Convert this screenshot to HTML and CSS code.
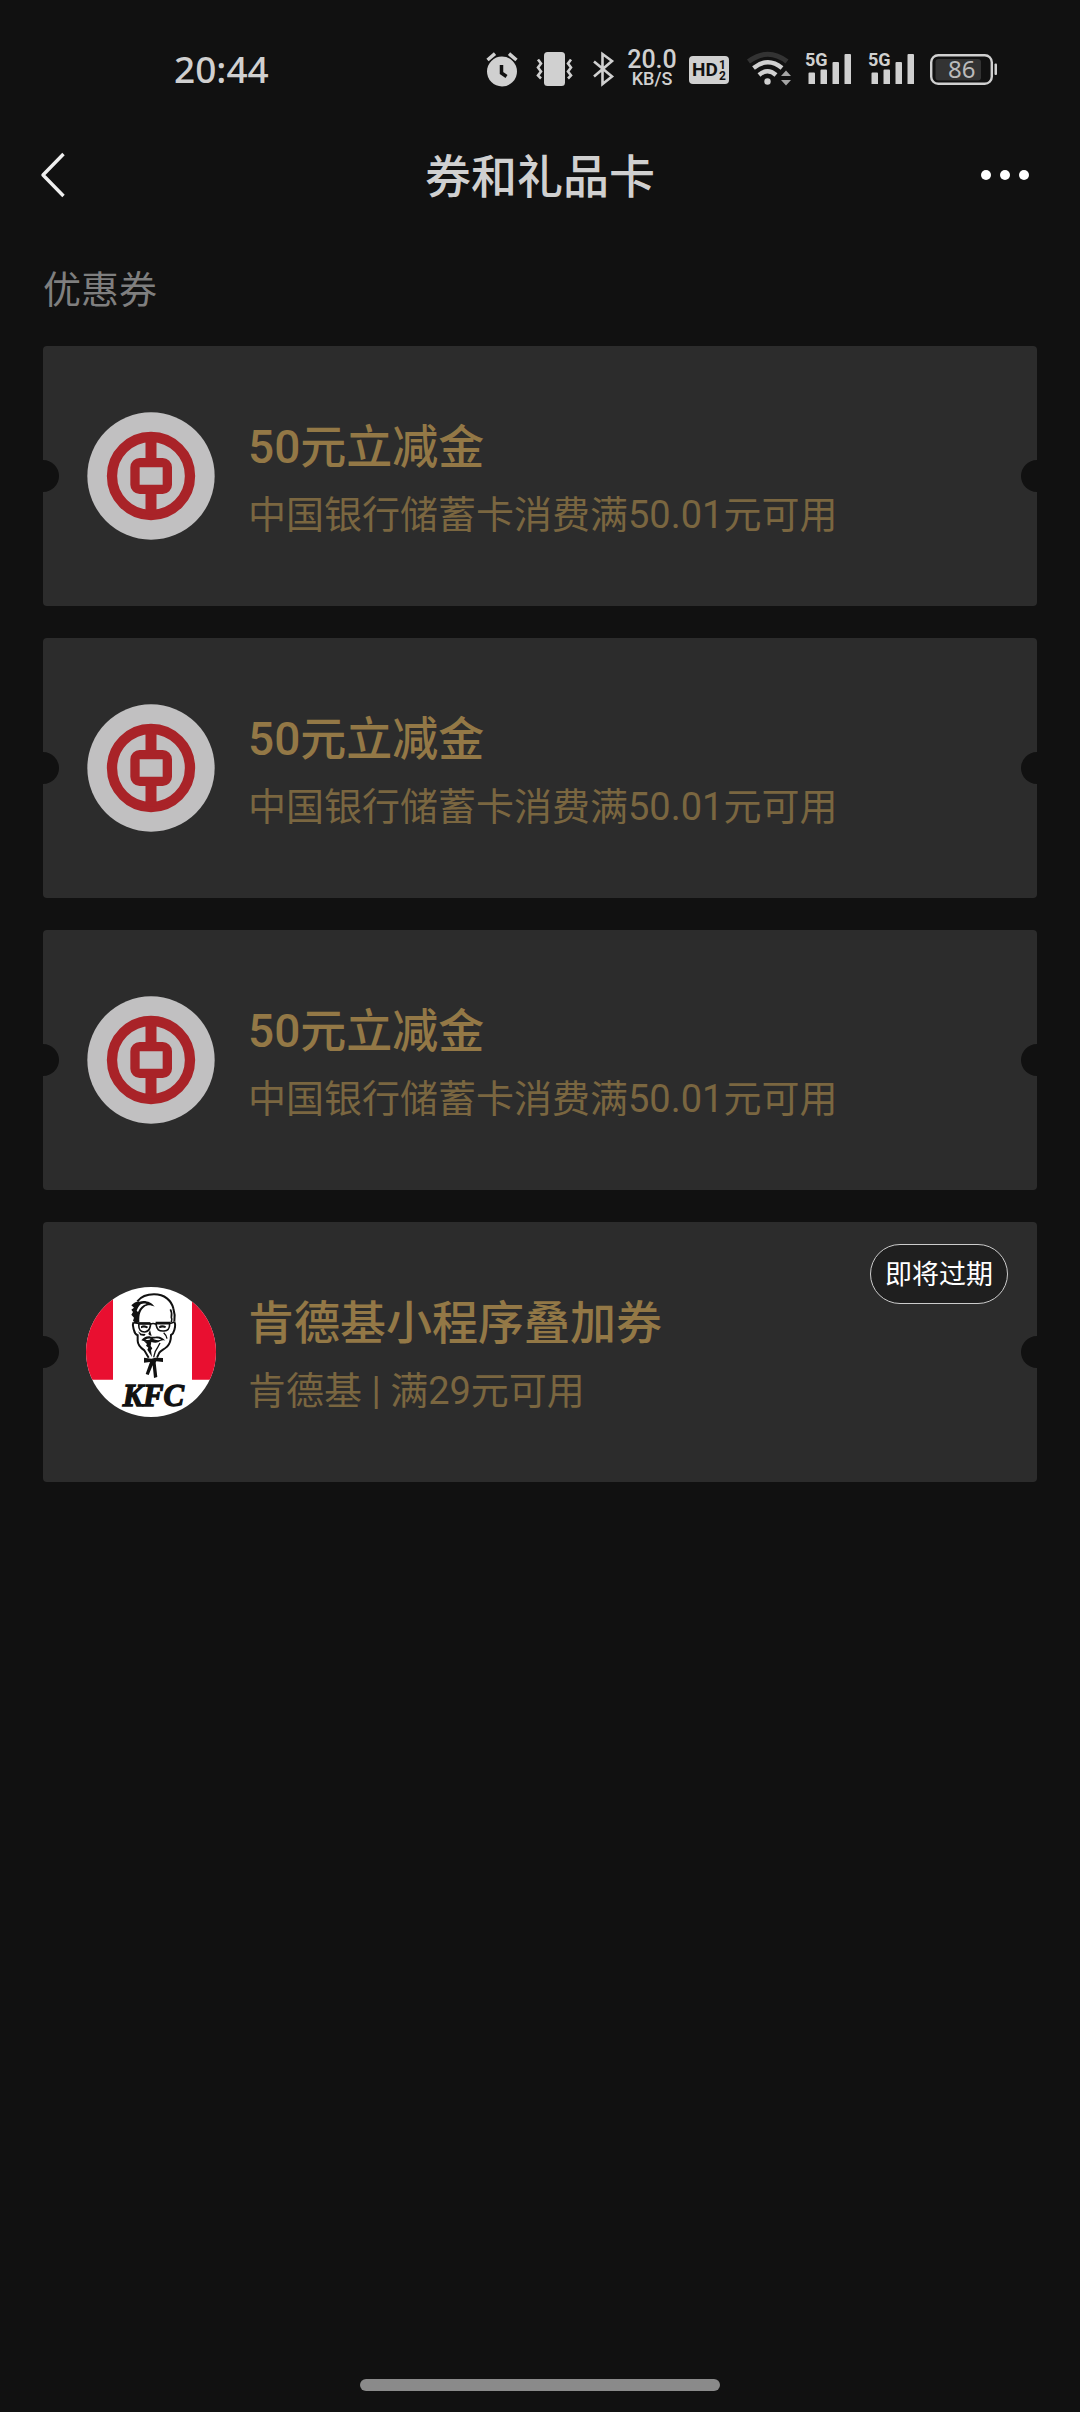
FILE: index.html
```html
<!DOCTYPE html>
<html lang="zh-CN">
<head>
  <meta charset="UTF-8" />
  <meta name="viewport" content="width=device-width, initial-scale=1.0" />
  <title>券和礼品卡</title>
  <link rel="stylesheet" href="styles.css">
</head>
<body>
  <!-- shared artwork -->
  <svg class="sprite" aria-hidden="true">
    <symbol id="boc" viewBox="0 0 390 390">
      <circle cx="195" cy="195" r="191" fill="#c1c0c1" />
      <g fill="none" stroke="#a92328">
        <circle cx="195" cy="195" r="117" stroke-width="31" />
        <path d="M195 85v70M195 240v70" stroke-width="33" />
        <rect x="147" y="155" width="97" height="80" rx="14" stroke-width="28" />
      </g>
    </symbol>
    <symbol id="bars" viewBox="0 0 55 36">
      <path d="M6.500 22.500q0-1 1-1h4.500q1 0 1 1V33h-6.500zM18.500 19.500q0-1 1-1h4.500q1 0 1 1V33h-6.500zM30.500 12q0-1 1-1h4.500q1 0 1 1V33h-6.500zM42.500 4q0-1 1-1h4.500q1 0 1 1V33h-6.500z" fill="#d0d0d0" />
    </symbol>
  </svg>

  <div class="status">
    <time>20:44</time>
    <div class="status-icons">
      <svg width="38" height="36" viewBox="0 0 38 36">
        <circle cx="18" cy="20.500" r="15" fill="#d0d0d0" />
        <path d="M3.500 9 11 2.700M25 2.700 32.500 9" stroke="#d0d0d0" stroke-width="3.500" />
        <path d="M17.500 14v8l5 3.500" fill="none" stroke="#111" stroke-width="3.500" />
      </svg>
      <svg width="49" height="36" viewBox="0 0 49 36">
        <rect x="14" y="1" width="21" height="34" rx="3.500" fill="#d0d0d0" />
        <path d="M8 8.500l3 4-3 4 3 4-3 4 3 3M41 8.500l-3 4 3 4-3 4 3 4-3 3" fill="none" stroke="#d0d0d0" stroke-width="2.600" />
      </svg>
      <svg width="31" height="36" viewBox="0 0 31 36">
        <path d="M7 10.500 25 25.500 15.500 33V3L25 10 7 25.500" fill="none" stroke="#d0d0d0" stroke-width="2.600" />
      </svg>
      <div class="speed"><b>20.0</b><span>KB/S</span></div>
      <svg width="46" height="36" viewBox="0 0 46 36">
        <rect x="3" y="5" width="40" height="28" rx="4" fill="#d0d0d0" />
        <text class="hd-text" x="6" y="25">HD</text>
        <text class="hd-num" x="33" y="18">1</text>
        <text class="hd-num" x="33" y="29">2</text>
      </svg>
      <svg width="54" height="36" viewBox="0 0 54 36">
        <path d="M8.500 10.500Q28-4 47 10.500" fill="none" stroke="#333" stroke-width="5" />
        <path d="M13.500 17Q28 5.500 42 17M19 24Q27.500 16.500 36 24" fill="none" stroke="#d0d0d0" stroke-width="4.400" />
        <circle cx="27.500" cy="30.500" r="3.200" fill="#d0d0d0" />
        <path d="M41 25l5-5.500 5 5.500zM41 29h10l-5 5.500z" fill="#a5a5a5" />
      </svg>
      <svg width="55" height="36" viewBox="0 0 55 36">
        <use href="#bars" />
        <text class="signal-text" x="3" y="15">5G</text>
      </svg>
      <svg width="55" height="36" viewBox="0 0 55 36">
        <use href="#bars" />
        <text class="signal-text" x="3" y="15">5G</text>
      </svg>
      <svg width="70" height="36" viewBox="0 0 70 36">
        <rect x="3.200" y="4.200" width="60.600" height="28.600" rx="7" fill="none" stroke="#d0d0d0" stroke-width="2.400" />
        <rect x="7.500" y="8" width="45.500" height="21.500" rx="3" fill="#333" />
        <rect x="66.500" y="12.500" width="2.500" height="11.500" rx="1" fill="#d0d0d0" />
        <text class="battery-text" x="20" y="27">86</text>
      </svg>
    </div>
  </div>

  <header class="navbar">
    <button class="back" aria-label="返回">
      <svg width="26" height="48" viewBox="0 0 26 48">
        <path d="M23.500 3 3 24 23.500 45" fill="none" stroke="#efefef" stroke-width="3.400" stroke-linejoin="round" />
      </svg>
    </button>
    <h1>券和礼品卡</h1>
    <button class="more" aria-label="更多">
      <svg width="60" height="12" viewBox="0 0 60 12">
        <g fill="#fff"><circle cx="6" cy="6" r="5" /><circle cx="25" cy="6" r="5" /><circle cx="44" cy="6" r="5" /></g>
      </svg>
    </button>
  </header>

  <main>
    <h2>优惠券</h2>
    <ul class="coupons">
      <li>
        <a class="coupon" href="#">
          <svg class="logo"><use href="#boc" /></svg>
          <div class="info">
            <h3>50元立减金</h3>
            <p>中国银行储蓄卡消费满50.01元可用</p>
          </div>
        </a>
      </li>
      <li>
        <a class="coupon" href="#">
          <svg class="logo"><use href="#boc" /></svg>
          <div class="info">
            <h3>50元立减金</h3>
            <p>中国银行储蓄卡消费满50.01元可用</p>
          </div>
        </a>
      </li>
      <li>
        <a class="coupon" href="#">
          <svg class="logo"><use href="#boc" /></svg>
          <div class="info">
            <h3>50元立减金</h3>
            <p>中国银行储蓄卡消费满50.01元可用</p>
          </div>
        </a>
      </li>
      <li>
        <a class="coupon" href="#">
          <svg class="logo" viewBox="48 51 390 390">
            <clipPath id="round"><circle cx="243" cy="246" r="195" /></clipPath>
            <g clip-path="url(#round)">
              <path d="M48 51h390v390H48z" fill="#fff" />
              <path d="M48 51h81v278H48zM366 51h72v278h-72z" fill="#e90f30" />
            </g>
            <!-- hair and head -->
            <path d="M202 94C214 79 232 73 252 73c32 0 52 18 58 42 4 12 5 26 3 40" fill="none" stroke="#111" stroke-width="6" />
            <path d="M184 106c8-8 16-12 24-11 16-6 36 0 46 15-12-6-22-6-30 0-12 9-17 21-16 46l-10 4-9-8 3-9-8-9 5-8-5-7 8-6z" fill="#111" />
            <path d="M212 103c6-3 12-3 18-1-12 3-20 11-26 24l-4-4c3-8 7-14 12-19z" fill="#fff" />
            <path d="M301 118c5 8 5 14 3 24 3 5 2 9 0 14" fill="none" stroke="#111" stroke-width="5" />
            <!-- ears and jaw -->
            <path d="M190 157c-4 8 0 16 2 24 2 9 4 13 11 15v16c0 14 10 22 20 29l13 22M313 156c5 7 2 16 0 24-2 8-4 12-10 15 0 14-2 26-12 35-9 9-17 10-23 18l-7 15" fill="none" stroke="#111" stroke-width="6" />
            <!-- glasses and eyes -->
            <path d="M190 158l18 2h30q5 0 3 8c-2 12-6 17-17 18-13 0-18-6-18-24M257 161h42l14-5M299 162c0 15-5 20-17 21-16 1-21-4-24-20M241 163q8-5 17 0" fill="none" stroke="#111" stroke-width="5" />
            <path d="M205 157h36v7h-36zM257 155h45v7h-45zM213 169q10-7 22 2l-5 4q-8-5-17 0zM266 170q9-8 22-1l-2 5q-9-4-17 1z" fill="#111" />
            <path d="M204 184l10 7 13 1-4 6-12-2zM240 180l-5 12q4 6 10 5l-2-6z" fill="#111" />
            <!-- moustache and goatee -->
            <path d="M214 211c8-10 18-14 28-11h14c12-3 22 2 30 12-9-3-14 0-20 4-8 4-16 2-22 0-8 2-17 0-30-5z" fill="#111" />
            <path d="M226 209q8-5 16-3-4 6-16 3zM248 206q14-4 26 3-14 4-26-3z" fill="#fff" />
            <path d="M222 214l22 2-2 12 5 7-4 6 3 20-14-22 3-6-7-6 3-5z" fill="#111" />
            <path d="M270 219q-8 16-14 25l-5 18M281 188q9 8 10 18" fill="none" stroke="#111" stroke-width="4" />
            <!-- string tie -->
            <path d="M222 263l22 3 12-3 23 1v12l-20-2-2 4 5 43-10 3-4-38-12 29-9-3 13-36-18 2z" fill="#111" />
            <text class="kfc-text" x="158" y="409">KFC</text>
          </svg>
          <div class="info">
            <h3>肯德基小程序叠加券</h3>
            <p>肯德基 | 满29元可用</p>
          </div>
          <span class="badge">即将过期</span>
        </a>
      </li>
    </ul>
  </main>

  <div class="home-bar"></div>
</body>
</html>
```

FILE: styles.css
```css
:root {
  --bg: #111;
  --card: #2c2c2c;
  --light: #d0d0d0;
  --gold: #937846;
  --gold-dim: #7a6640;
}

* {
  box-sizing: border-box;
}

body {
  font-family: Roboto, "Noto Sans CJK SC", sans-serif;
  margin: 0;
  min-height: 100vh;
  background-color: var(--bg);
  color: var(--light);
  display: flex;
  flex-direction: column;
}

h1, h2, h3, p, ul {
  margin: 0;
  padding: 0;
}

svg {
  display: block;
  flex: none;
}

button {
  padding: 0;
  border: none;
  background: none;
}

.sprite {
  position: absolute;
  width: 0;
  height: 0;
}

/* status bar */
.status {
  display: flex;
  justify-content: space-between;
  align-items: center;
  height: 120px;
  padding: 18px 82px 0 174px;
  font-family: "Noto Sans", sans-serif;
}

.status time {
  font-size: 37px;
  font-weight: 500;
  line-height: 40px;
}

.status-icons {
  display: flex;
  align-items: center;
  gap: 8px;
}

.speed {
  width: 52px;
  display: flex;
  flex-direction: column;
  align-items: center;
  font-family: Roboto, sans-serif;
}

.speed b {
  font-size: 25px;
  font-weight: 500;
  line-height: 20px;
}

.speed span {
  font-size: 18px;
  font-weight: 500;
  line-height: 18px;
}

.signal-text, .hd-text, .hd-num {
  font-family: Roboto, sans-serif;
  font-weight: bold;
}

.signal-text {
  font-size: 18px;
  fill: var(--light);
}

.hd-text {
  font-size: 19px;
  fill: var(--bg);
}

.hd-num {
  font-size: 12px;
  fill: var(--bg);
}

.battery-text {
  font-size: 24px;
  fill: #bbb;
}

/* title bar */
.navbar {
  display: grid;
  grid-template-columns: 1fr auto 1fr;
  align-items: center;
  height: 110px;
  padding: 0 40px;
}

.back {
  justify-self: start;
}

.more {
  justify-self: end;
}

h1 {
  padding-top: 4px;
  font-size: 46px;
  font-weight: 500;
  line-height: 60px;
}

/* coupons */
main {
  padding: 30px 43px;
}

h2 {
  margin-bottom: 26px;
  font-size: 38px;
  font-weight: 400;
  line-height: 60px;
  color: #7f7f7f;
}

.coupons {
  list-style: none;
  display: flex;
  flex-direction: column;
  gap: 32px;
}

.coupon {
  position: relative;
  display: flex;
  align-items: center;
  gap: 32px;
  min-height: 260px;
  padding: 0 43px;
  border-radius: 4px;
  overflow: hidden;
  background-color: var(--card);
  text-decoration: none;
}

/* ticket notches */
.coupon::before,
.coupon::after {
  content: "";
  position: absolute;
  top: calc(50% - 16px);
  width: 32px;
  height: 32px;
  border-radius: 50%;
  background-color: var(--bg);
}

.coupon::before {
  left: -16px;
}

.coupon::after {
  right: -16px;
}

.logo {
  width: 130px;
  height: 130px;
}

.kfc-text {
  font: italic bold 92px "Liberation Serif", serif;
  fill: #111;
  stroke: #111;
  stroke-width: 4px;
}

.info {
  padding-top: 6px;
}

.info h3 {
  font-size: 46px;
  font-weight: 500;
  line-height: 72px;
  color: var(--gold);
}

.info p {
  font-size: 38px;
  line-height: 64px;
  color: var(--gold-dim);
}

.badge {
  position: absolute;
  top: 22px;
  right: 29px;
  padding: 2px 14px 0;
  border: 1px solid #ccc;
  border-radius: 30px;
  background-color: #1f1f1f;
  font-size: 27px;
  line-height: 56px;
  color: #fff;
}

.home-bar {
  width: calc(100% / 3);
  height: 12px;
  margin: auto auto 21px;
  border-radius: 6px;
  background-color: #8a8a8a;
}
```
